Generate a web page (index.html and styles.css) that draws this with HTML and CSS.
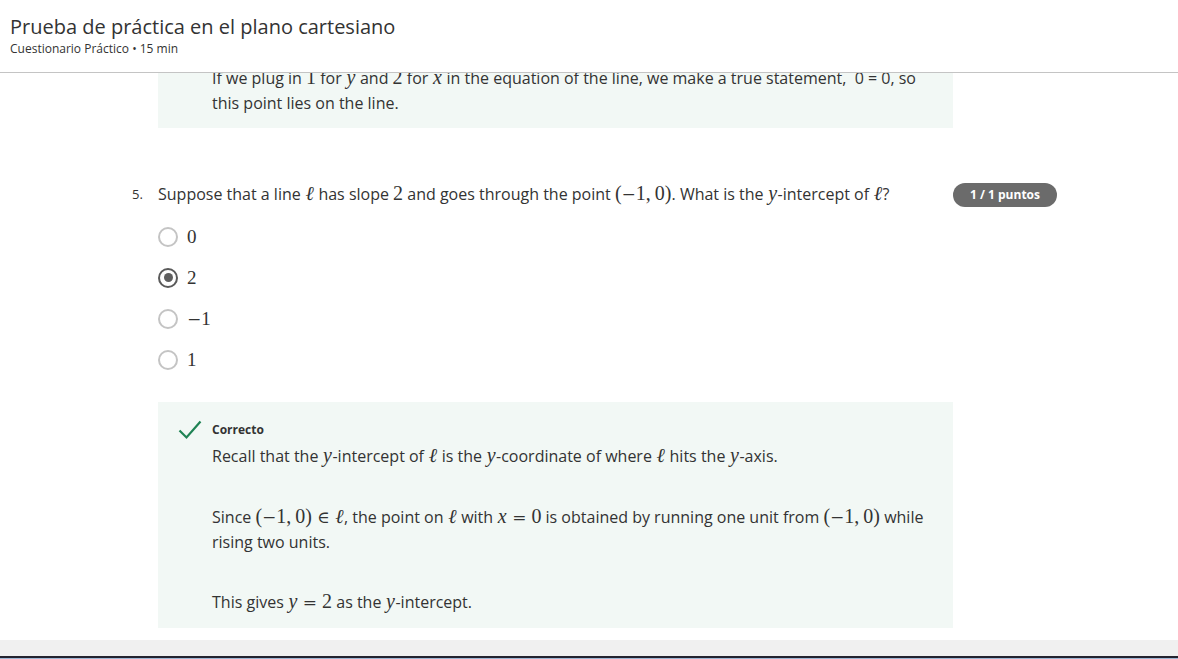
FILE: index.html
```html
<!DOCTYPE html>
<html lang="es">
<head>
<meta charset="utf-8">
<title>Prueba de práctica en el plano cartesiano</title>
<link rel="stylesheet" href="styles.css">
</head>
<body>
<header class="header">
  <h1 class="title">Prueba de práctica en el plano cartesiano</h1>
  <div class="subtitle">Cuestionario Práctico • 15 min</div>
</header>
<main class="content">
  <div class="scroll">
    <div class="feedback feedback-top">
      <p>If we plug in <span class="mr">1</span> for <span class="mi">y</span> and <span class="mr">2</span> for <span class="mi">x</span> in the equation of the line, we make a true statement,&nbsp; 0 = 0, so this point lies on the line.</p>
    </div>

    <section class="question">
      <div class="qnum">5.</div>
      <div class="qtext">Suppose that a line <span class="mi">ℓ</span> has slope <span class="mr">2</span> and goes through the point <span class="mr">(<span class="op">−</span>1,&thinsp;0)</span>. What is the <span class="mi">y</span>-intercept of <span class="mi">ℓ</span>?</div>
      <div class="badge">1 / 1 puntos</div>
    </section>

    <div class="options">
      <label class="option"><span class="radio"></span><span class="mr opt">0</span></label>
      <label class="option"><span class="radio checked"></span><span class="mr opt">2</span></label>
      <label class="option"><span class="radio"></span><span class="mr opt"><span class="op">−</span>1</span></label>
      <label class="option"><span class="radio"></span><span class="mr opt">1</span></label>
    </div>

    <div class="feedback feedback-main">
      <div class="fb-icon">
        <svg width="24" height="20" viewBox="0 0 24 20"><path d="M1.5 10.5 L8.5 17.5 L22.5 1.5" fill="none" stroke="#1f8354" stroke-width="2.2"/></svg>
      </div>
      <div class="fb-body">
        <div class="fb-label">Correcto</div>
        <p class="first">Recall that the <span class="mi">y</span>-intercept of <span class="mi">ℓ</span> is the <span class="mi">y</span>-coordinate of where <span class="mi">ℓ</span> hits the <span class="mi">y</span>-axis.</p>
        <p class="gap1">Since <span class="mr">(<span class="op">−</span>1,&thinsp;0)<span class="op rel">∈</span></span><span class="mi">ℓ</span>, the point on <span class="mi">ℓ</span> with <span class="mi">x</span><span class="op rel">=</span><span class="mr">0</span> is obtained by running one unit from <span class="mr">(<span class="op">−</span>1,&thinsp;0)</span> while rising two units.</p>
        <p class="gap2">This gives <span class="mi">y</span><span class="op rel">=</span><span class="mr">2</span> as the <span class="mi">y</span>-intercept.</p>
      </div>
    </div>
  </div>
</main>
<footer class="bottom">
  <div class="band"></div>
  <div class="edge"></div>
  <div class="task"></div>
</footer>
</body>
</html>
```

FILE: styles.css
```css
* { box-sizing: border-box; }
html, body { margin: 0; padding: 0; }
body {
  width: 1178px;
  height: 659px;
  display: flex;
  flex-direction: column;
  overflow: hidden;
  background: #fff;
  color: #333;
  font-family: "Open Sans", "Noto Sans", sans-serif;
}
.header {
  height: 73px;
  flex: none;
  padding: 13px 10px 0;
  border-bottom: 1px solid #c4c4c4;
}
.title {
  margin: 0;
  font-size: 20px;
  font-weight: 400;
  line-height: 28px;
  color: #333;
}
.subtitle {
  font-size: 12px;
  line-height: 16px;
  color: #333;
}
.content {
  flex: 1;
  overflow: hidden;
}
.scroll {
  margin-top: -7px;
  padding-left: 132px;
}
p { margin: 0; }
.mi {
  font-family: "Liberation Serif", "DejaVu Serif", serif;
  font-style: italic;
  font-size: 20px;
  line-height: 1;
  padding: 0 0.5px;
}
.mr {
  font-family: "Liberation Serif", "DejaVu Serif", serif;
  font-size: 20px;
  line-height: 1;
}
.op {
  font-family: "DejaVu Serif", serif;
  font-style: normal;
  font-size: 17px;
  font-weight: 300;
}
.op.rel { margin: 0 5px; }
.feedback {
  margin-left: 26px;
  width: 795px;
  background: #f2f8f5;
  font-size: 16px;
  line-height: 25px;
}
.feedback-top {
  padding: 0 24px 12px 54px;
}
.question {
  display: grid;
  grid-template-columns: 26px 795px auto;
  align-items: center;
  margin-top: 54px;
  line-height: 25px;
}
.qnum { font-size: 13px; }
.qtext { font-size: 16px; }
.badge {
  justify-self: start;
  height: 24px;
  width: 104px;
  border-radius: 12px;
  background: #6b6b6b;
  color: #fff;
  font-size: 12px;
  font-weight: 700;
  line-height: 24px;
  text-align: center;
}
.options {
  margin-left: 26px;
  margin-top: 9px;
}
.option {
  display: flex;
  align-items: center;
  height: 41px;
  gap: 9px;
}
.radio {
  width: 20px;
  height: 20px;
  border-radius: 50%;
  border: 2px solid #c4c4c4;
  position: relative;
  flex: none;
}
.radio.checked { border: 2.5px solid #5a5a5a; }
.radio.checked::after {
  content: "";
  position: absolute;
  left: 50%;
  top: 50%;
  width: 9px;
  height: 9px;
  margin: -4.5px 0 0 -4.5px;
  border-radius: 50%;
  background: #5f5f5f;
}
.opt { font-size: 19px; }
.feedback-main {
  margin-top: 22px;
  display: grid;
  grid-template-columns: 34px 1fr;
  padding: 19px 24px 14px 20px;
}
.fb-icon svg { display: block; margin-top: -1px; }
.fb-label {
  font-size: 12px;
  font-weight: 700;
  line-height: 18px;
}
.fb-body p.first { margin-top: 5px; }
.fb-body p.gap1 { margin-top: 36px; }
.fb-body p.gap2 { margin-top: 35px; }
.bottom { flex: none; margin-top: 12px; }
.band { height: 16px; background: #f0f0f0; }
.edge { height: 2px; background: #23232e; }
.task { height: 1px; background: #9fb6d4; }
```
